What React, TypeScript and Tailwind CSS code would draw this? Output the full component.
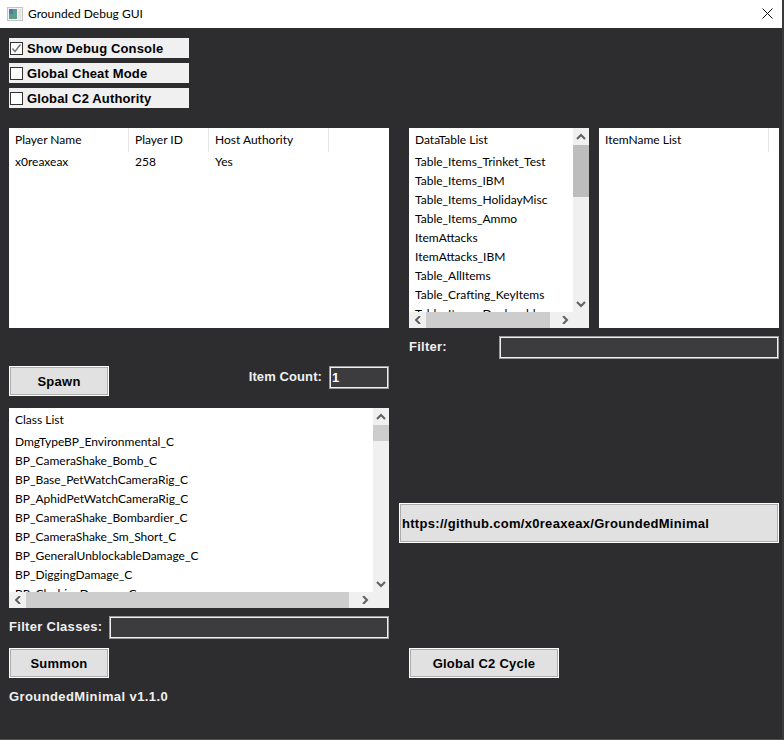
import React from 'react'

const sans = 'font-["Lato","Noto_Sans",sans-serif]'
const pixel = 'font-["Liberation_Sans",sans-serif] font-bold'

const tables = [
    'Table_Items_Trinket_Test',
    'Table_Items_IBM',
    'Table_Items_HolidayMisc',
    'Table_Items_Ammo',
    'ItemAttacks',
    'ItemAttacks_IBM',
    'Table_AllItems',
    'Table_Crafting_KeyItems',
    'Table_Items_Deployables',
]

const classes = [
    'DmgTypeBP_Environmental_C',
    'BP_CameraShake_Bomb_C',
    'BP_Base_PetWatchCameraRig_C',
    'BP_AphidPetWatchCameraRig_C',
    'BP_CameraShake_Bombardier_C',
    'BP_CameraShake_Sm_Short_C',
    'BP_GeneralUnblockableDamage_C',
    'BP_DiggingDamage_C',
    'BP_ClashingDamage_C',
]

function Arrow({ dir }: { dir: 'up' | 'down' | 'left' | 'right' }) {
    const points = {
        up: '1,6 5,2 9,6',
        down: '1,2 5,6 9,2',
        left: '7,0 3,4 7,8',
        right: '3,0 7,4 3,8',
    }[dir]
    return (
        <svg width="10" height="8" viewBox="0 0 10 8" className="shrink-0">
            <polyline points={points} fill="none" stroke="#606060" strokeWidth="2" />
        </svg>
    )
}

function VScroll({ thumb, thumbClass }: { thumb: number; thumbClass: string }) {
    return (
        <div className="w-4 shrink-0 bg-[#f0f0f0] flex flex-col">
            <div className="h-[17px] flex items-center justify-center"><Arrow dir="up" /></div>
            <div className={`${thumbClass} shrink-0`} style={{ height: thumb }} />
            <div className="flex-1" />
            <div className="h-[17px] flex items-center justify-center"><Arrow dir="down" /></div>
        </div>
    )
}

function HScroll({ thumb }: { thumb: number }) {
    return (
        <div className="h-4 shrink-0 bg-[#f0f0f0] flex">
            <div className="w-[17px] flex items-center justify-center"><Arrow dir="left" /></div>
            <div className="bg-[#cdcdcd] shrink-0" style={{ width: thumb }} />
            <div className="flex-1" />
            <div className="w-[17px] flex items-center justify-center"><Arrow dir="right" /></div>
            <div className="w-4" />
        </div>
    )
}

function ColHead({ label, width }: { label: string; width: string }) {
    return (
        <div className={`${width} h-6 shrink-0 pl-[6px] border-r border-[#e5e5e5] leading-[24px]`}>{label}</div>
    )
}

function ScrollList({ label, rows, thumb, hthumb, thumbClass }: { label: string; rows: string[]; thumb: number; hthumb: number; thumbClass: string }) {
    return (
        <div className={`h-[200px] flex flex-col bg-white text-[12px] text-black ${sans}`}>
            <div className="flex flex-1 min-h-0">
                <div className="flex-1 min-w-0 overflow-hidden">
                    <div className="h-6 pl-[6px] leading-[24px]">{label}</div>
                    {rows.map((r) => (
                        <div key={r} className="h-[19px] pl-[6px] leading-[19px] whitespace-nowrap">{r}</div>
                    ))}
                </div>
                <VScroll thumb={thumb} thumbClass={thumbClass} />
            </div>
            <HScroll thumb={hthumb} />
        </div>
    )
}

function Check({ label, checked }: { label: string; checked?: boolean }) {
    return (
        <div className="h-5 w-[180px] bg-[#f0f0f0] flex items-center">
            <div className="w-[13px] h-[13px] ml-[1px] border border-[#333] bg-white flex items-center justify-center shrink-0">
                {checked && (
                    <svg width="11" height="11" viewBox="0 0 11 11">
                        <polyline points="1.5,5.5 4,8.5 9.5,1.5" fill="none" stroke="#777" strokeWidth="1.5" />
                    </svg>
                )}
            </div>
            <span className={`ml-1 pt-[1px] text-[13px] tracking-[0.15px] text-black whitespace-nowrap ${pixel}`}>{label}</span>
        </div>
    )
}

function Btn({ label, className }: { label: string; className: string }) {
    return (
        <div className={`h-[30px] bg-[#e1e1e1] border border-white shrink-0 ${className}`}>
            <div className={`w-full h-full pt-[1px] border border-[#adadad] flex items-center justify-center text-[13px] tracking-[0.25px] text-black ${pixel}`}>{label}</div>
        </div>
    )
}

function Field({ className, value }: { className: string; value?: string }) {
    return (
        <div className={`h-[23px] bg-[#3c3c3f] border-2 border-[#f0f0f0] outline outline-1 -outline-offset-1 outline-[#9a9a9a] shrink-0 text-[13px] text-white leading-[20px] pl-[1px] ${pixel} ${className}`}>
            {value}
        </div>
    )
}

export default function App() {
    return (
        <div className="w-[784px] h-[740px] flex flex-col bg-[#2d2d30] overflow-hidden border-r-2 border-b border-r-[#3a3a3a] border-b-[#55524e]">
            {/* title bar */}
            <div className={`h-7 shrink-0 bg-white flex items-center pl-[7px] pr-[9px] text-[12px] text-black ${sans}`}>
                <svg width="16" height="14" viewBox="0 0 16 14" className="shrink-0">
                    <rect x="0.5" y="0.5" width="15" height="13" fill="#f2f2f2" stroke="#c4c4c4" />
                    <rect x="2" y="2" width="8" height="10" fill="#5f9a8c" />
                    <rect x="2" y="2" width="4" height="5" fill="#4f7ba3" />
                    <rect x="11" y="2" width="3" height="10" fill="#e2e2e2" />
                </svg>
                <span className="ml-[5px]">Grounded Debug GUI</span>
                <svg width="11" height="11" viewBox="0 0 11 11" className="ml-auto -mt-[2px]">
                    <path d="M0.5 0.5 L10.5 10.5 M10.5 0.5 L0.5 10.5" stroke="#111" strokeWidth="1" />
                </svg>
            </div>

            <div className="flex-1 flex pl-[9px] gap-[10px]">
                {/* left column */}
                <div className="w-[380px] shrink-0 flex flex-col pt-[10px]">
                    <div className="flex flex-col gap-[5px]">
                        <Check label="Show Debug Console" checked />
                        <Check label="Global Cheat Mode" />
                        <Check label="Global C2 Authority" />
                    </div>

                    <div className={`mt-5 h-[200px] bg-white text-[12px] text-black ${sans}`}>
                        <div className="flex">
                            <ColHead label="Player Name" width="w-[120px]" />
                            <ColHead label="Player ID" width="w-20" />
                            <ColHead label="Host Authority" width="w-[120px]" />
                        </div>
                        <div className="flex h-[19px] leading-[19px]">
                            <div className="w-[120px] pl-[6px]">x0reaxeax</div>
                            <div className="w-20 pl-[6px]">258</div>
                            <div className="pl-[6px]">Yes</div>
                        </div>
                    </div>

                    <div className="mt-[38px] flex items-start justify-between">
                        <Btn label="Spawn" className="w-[100px]" />
                        <div className="flex">
                            <span className={`text-[13px] tracking-[0.1px] text-[#f0f0f0] leading-[22px] mr-[7px] ${pixel}`}>Item Count:</span>
                            <Field className="w-[60px]" value="1" />
                        </div>
                    </div>

                    <div className="mt-3">
                        <ScrollList label="Class List" rows={classes} thumb={16} hthumb={323} thumbClass="bg-[#cdcdcd]" />
                    </div>

                    <div className="mt-2 flex justify-between">
                        <span className={`text-[13px] tracking-[0.3px] text-[#f0f0f0] leading-[22px] ${pixel}`}>Filter Classes:</span>
                        <Field className="w-[280px]" />
                    </div>

                    <Btn label="Summon" className="w-[100px] mt-[9px]" />
                    <span className={`mt-[11px] text-[13px] tracking-[0.4px] text-[#f0f0f0] leading-[16px] ${pixel}`}>GroundedMinimal v1.1.0</span>
                </div>

                {/* right column */}
                <div className="w-[380px] shrink-0 flex flex-col pt-[100px]">
                    <div className="pl-[10px] flex gap-[10px]">
                        <div className="w-[180px]">
                            <ScrollList label="DataTable List" rows={tables} thumb={52} hthumb={124} thumbClass="bg-[#bdbdbd]" />
                        </div>
                        <div className={`w-[180px] h-[200px] bg-white text-[12px] text-black ${sans}`}>
                            <ColHead label="ItemName List" width="w-[170px]" />
                        </div>
                    </div>

                    <div className="mt-2 pl-[10px] flex justify-between">
                        <span className={`text-[13px] tracking-[0.25px] text-[#f0f0f0] leading-[22px] ${pixel}`}>Filter:</span>
                        <Field className="w-[280px]" />
                    </div>

                    <div className="mt-[144px] h-10 bg-[#e1e1e1] border border-white shrink-0">
                        <div className={`h-full pt-[1px] border border-[#adadad] flex items-center pl-[1px] text-[13px] tracking-[0.3px] text-black ${pixel}`}>
                            https://github.com/x0reaxeax/GroundedMinimal
                        </div>
                    </div>

                    <div className="mt-[105px] pl-[10px]">
                        <Btn label="Global C2 Cycle" className="w-[150px]" />
                    </div>
                </div>
            </div>
        </div>
    )
}
